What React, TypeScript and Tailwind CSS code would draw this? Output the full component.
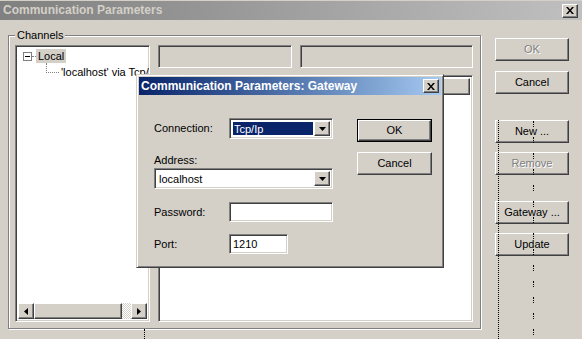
import React from "react";

const raised =
  "border border-t-white border-l-white border-r-[#404040] border-b-[#404040] shadow-[inset_-1px_-1px_#808080]";
const sunken =
  "border border-t-[#808080] border-l-[#808080] border-r-white border-b-white shadow-[inset_1px_1px_#404040,inset_-1px_-1px_#d4d0c8]";

function Btn({
  children,
  disabled,
  def,
  className = "",
}: {
  children: React.ReactNode;
  disabled?: boolean;
  def?: boolean;
  className?: string;
}) {
  if (def) {
    return (
      <div className={`border border-black ${className}`}>
        <div className={`${raised} h-full flex items-center justify-center`}>
          <span>{children}</span>
        </div>
      </div>
    );
  }
  return (
    <div className={`${raised} flex items-center justify-center ${className}`}>
      <span
        className={
          disabled ? "text-[#808080] [text-shadow:1px_1px_0_#ffffff]" : ""
        }
      >
        {children}
      </span>
    </div>
  );
}

function CloseBox({ className = "" }: { className?: string }) {
  return (
    <div className={`${raised} w-[16px] h-[14px] bg-[#d4d0c8] flex items-center justify-center ${className}`}>
      <svg width="8" height="7" viewBox="0 0 8 7">
        <path d="M0 0h2l2 2.5L6 0h2L5 3.5 8 7H6L4 4.5 2 7H0l3-3.5z" fill="#000" />
      </svg>
    </div>
  );
}

function DropArrow() {
  return (
    <div className={`${raised} w-[16px] h-full bg-[#d4d0c8] flex items-center justify-center`}>
      <svg width="7" height="4" viewBox="0 0 7 4">
        <path d="M0 0h7L3.5 4z" fill="#000" />
      </svg>
    </div>
  );
}

export default function App() {
  const groups = Array.from({ length: 14 });
  return (
    <div className="w-[582px] h-[339px] bg-[#d4d0c8] relative overflow-hidden font-['Liberation_Sans',Arial,sans-serif] text-[11px] leading-[13px] text-black">
      {/* main title bar */}
      <div className="h-[19px] mt-[1px] flex items-center bg-gradient-to-r from-[#808080] to-[#c0c0c0] pl-[3px] pr-[4px]">
        <span className="font-bold text-[#d4d0c8] text-[12px]">Communication Parameters</span>
        <CloseBox className="ml-auto" />
      </div>

      <div className="flex">
        {/* Channels groupbox */}
        <div className="relative ml-[8px] mt-[15px] w-[473px] h-[294px] border border-[#808080] shadow-[inset_1px_1px_white,1px_1px_white] flex pl-[6px] pt-[9px]">
          <span className="absolute -top-[7px] left-[6px] bg-[#d4d0c8] px-[2px]">Channels</span>

          {/* tree view */}
          <div className={`${sunken} bg-white w-[135px] h-[277px] p-[2px] flex flex-col overflow-hidden`}>
            <div className="flex-1 relative">
              <div className="flex items-center mt-[1px] ml-[5px] h-[14px]">
                <div className="shrink-0 w-[9px] h-[9px] border border-[#808080] flex items-center justify-center bg-white">
                  <div className="w-[5px] h-[1px] bg-black" />
                </div>
                <div className="shrink-0 w-[4px] border-t border-dotted border-[#808080]" />
                <span className="bg-[#d4d0c8] px-[2px] h-[14px] leading-[14px]">Local</span>
              </div>
              <div className="flex ml-[28px]">
                <div className="shrink-0 w-[13px] h-[10px] border-l border-b border-dotted border-[#808080]" />
                <span className="ml-[2px] mt-[3px] whitespace-nowrap">'localhost' via Tcp/Ip</span>
              </div>
            </div>
            {/* h-scrollbar */}
            <div className="h-[16px] flex">
              <div className={`${raised} w-[16px] bg-[#d4d0c8] flex items-center justify-center`}>
                <svg width="4" height="7" viewBox="0 0 4 7">
                  <path d="M4 0v7L0 3.5z" fill="#000" />
                </svg>
              </div>
              <div className={`${raised} w-[88px] bg-[#d4d0c8]`} />
              <div className="flex-1 bg-[repeating-conic-gradient(#d4d0c8_0_25%,#ffffff_0_50%)] bg-[length:2px_2px]" />
              <div className={`${raised} w-[16px] bg-[#d4d0c8] flex items-center justify-center`}>
                <svg width="4" height="7" viewBox="0 0 4 7">
                  <path d="M0 0v7L4 3.5z" fill="#000" />
                </svg>
              </div>
            </div>
          </div>

          {/* right column */}
          <div className="ml-[8px] w-[315px] flex flex-col">
            <div className="flex gap-[8px] h-[23px]">
              <div className={`${sunken} w-[134px]`} />
              <div className={`${sunken} flex-1`} />
            </div>
            <div className={`${sunken} mt-[7px] h-[247px] bg-white p-[2px] flex flex-col`}>
              <div className={`${raised} h-[17px] bg-[#d4d0c8]`} />
            </div>
          </div>
        </div>

        {/* buttons */}
        <div className="ml-[14px] w-[74px] flex flex-col">
          <Btn disabled className="h-[23px] mt-[18px]">OK</Btn>
          <Btn className="h-[23px] mt-[10px]">Cancel</Btn>
          <Btn className="h-[23px] mt-[26px]">New ...</Btn>
          <Btn disabled className="h-[23px] mt-[9px]">Remove</Btn>
          <Btn className="h-[23px] mt-[26px]">Gateway ...</Btn>
          <Btn className="h-[23px] mt-[9px]">Update</Btn>
        </div>
      </div>

      {/* dotted artifacts */}
      <div className="absolute left-[498px] top-[120px] h-[219px] border-l border-dotted border-black" />
      <div className="absolute left-[533px] top-[121px] flex flex-col gap-[10px]">
        {groups.map((_, i) => (
          <div key={i} className="h-[6px] border-l border-dotted border-black" />
        ))}
      </div>
      <div className="absolute left-[144px] top-[329px] h-[10px] border-l border-dotted border-black" />

      {/* Gateway dialog */}
      <div className="absolute left-[136px] top-[74px] w-[308px] h-[194px] bg-[#d4d0c8] border border-t-[#d4d0c8] border-l-[#d4d0c8] border-r-[#404040] border-b-[#404040] shadow-[inset_1px_1px_white,inset_-1px_-1px_#808080] p-[2px] flex flex-col">
        <div className="h-[18px] flex items-center bg-gradient-to-r from-[#0a246a] to-[#a6caf0] pl-[2px] pr-[2px]">
          <span className="font-bold text-white text-[12px]">Communication Parameters: Gateway</span>
          <CloseBox className="ml-auto" />
        </div>
        <div className="flex pl-[15px] pt-[23px]">
          <div className="w-[179px] flex flex-col">
            <div className="flex items-center h-[21px]">
              <span className="w-[75px]">Connection:</span>
              <div className={`${sunken} bg-white w-[104px] h-[21px] p-[2px] flex`}>
                <div className="flex-1 m-[1px] bg-[#0a246a] text-white pl-[1px] leading-[15px]">Tcp/Ip</div>
                <DropArrow />
              </div>
            </div>
            <span className="mt-[15px]">Address:</span>
            <div className={`${sunken} bg-white w-[179px] h-[21px] p-[2px] flex mt-[1px]`}>
              <div className="flex-1 pl-[2px] leading-[17px]">localhost</div>
              <DropArrow />
            </div>
            <div className="flex items-center h-[20px] mt-[13px]">
              <span className="w-[75px]">Password:</span>
              <div className={`${sunken} bg-white w-[104px] h-[20px]`} />
            </div>
            <div className="flex items-center h-[20px] mt-[12px]">
              <span className="w-[75px]">Port:</span>
              <div className={`${sunken} bg-white w-[59px] h-[20px] pl-[3px] leading-[18px]`}>1210</div>
            </div>
          </div>
          <div className="ml-[24px] w-[75px] flex flex-col">
            <Btn def className="h-[23px] mt-[1px]">OK</Btn>
            <Btn className="h-[23px] mt-[10px]">Cancel</Btn>
          </div>
        </div>
      </div>
    </div>
  );
}
